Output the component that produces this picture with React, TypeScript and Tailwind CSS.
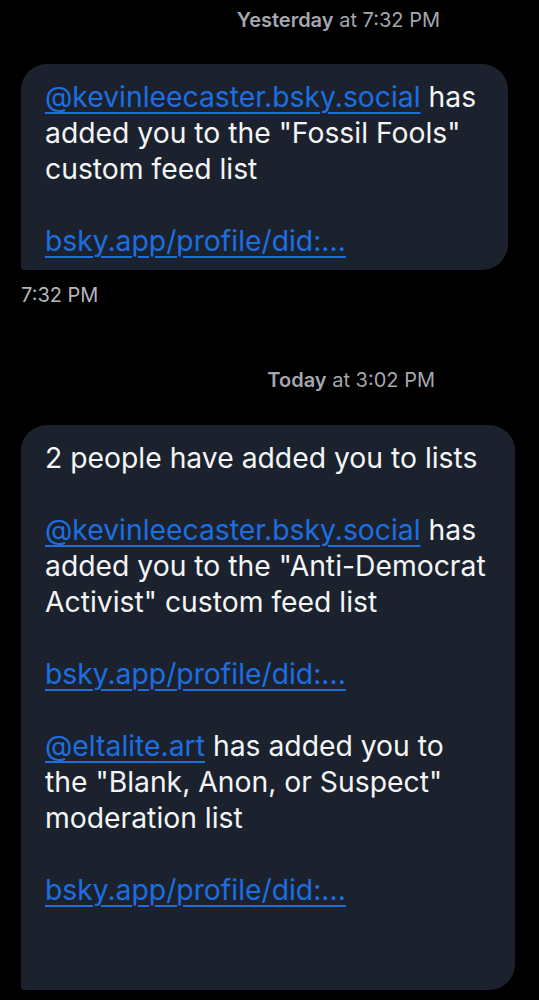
import React from 'react';

const Link: React.FC<{ children: React.ReactNode }> = ({ children }) => (
  <span className="text-[#1d6fe0] underline decoration-2 underline-offset-[5px]">{children}</span>
);

const DayHeader: React.FC<{ day: string; time: string; pad: string }> = ({ day, time, pad }) => (
  <div className={`flex justify-end ${pad}`}>
    <p className="text-[20px] leading-6 text-[#a4a7ae]">
      <span className="font-semibold">{day}</span> at {time}
    </p>
  </div>
);

const App: React.FC = () => {
  return (
    <div
      className="min-h-[1000px] w-full bg-black text-white"
      style={{ fontFamily: 'Inter, "Noto Sans", sans-serif' }}
    >
      <div className="pt-[8px]">
        <DayHeader day="Yesterday" time="7:32 PM" pad="pr-[99px]" />
      </div>

      {/* Message 1 */}
      <div className="mt-[32px] ml-[21px] w-[487px] rounded-[26px] rounded-bl-[3px] bg-[#1b222d] pl-[24px] pr-[18px] pt-[15px] pb-[11px] text-[28.3px] leading-9 text-[#f4f5f6]">
        <p>
          <Link>@kevinleecaster.bsky.social</Link> has added you to the "Fossil Fools" custom feed list
        </p>
        <p className="mt-9">
          <Link>bsky.app/profile/did:...</Link>
        </p>
      </div>
      <p className="ml-[21px] mt-[13px] text-[20px] leading-6 text-[#b4b6bb]">7:32 PM</p>

      <div className="mt-[61px]">
        <DayHeader day="Today" time="3:02 PM" pad="pr-[104px]" />
      </div>

      {/* Message 2 */}
      <div className="mt-[33px] ml-[21px] w-[494px] rounded-[26px] rounded-bl-[3px] bg-[#1b222d] pl-[24px] pr-[25px] pt-[15px] pb-[82px] text-[28.3px] leading-9 text-[#f4f5f6]">
        <p>2 people have added you to lists</p>
        <p className="mt-9">
          <Link>@kevinleecaster.bsky.social</Link> has added you to the "Anti-Democrat Activist" custom feed list
        </p>
        <p className="mt-9">
          <Link>bsky.app/profile/did:...</Link>
        </p>
        <p className="mt-9">
          <Link>@eltalite.art</Link> has added you to the "Blank, Anon, or Suspect" moderation list
        </p>
        <p className="mt-9">
          <Link>bsky.app/profile/did:...</Link>
        </p>
      </div>
    </div>
  );
};

export default App;
